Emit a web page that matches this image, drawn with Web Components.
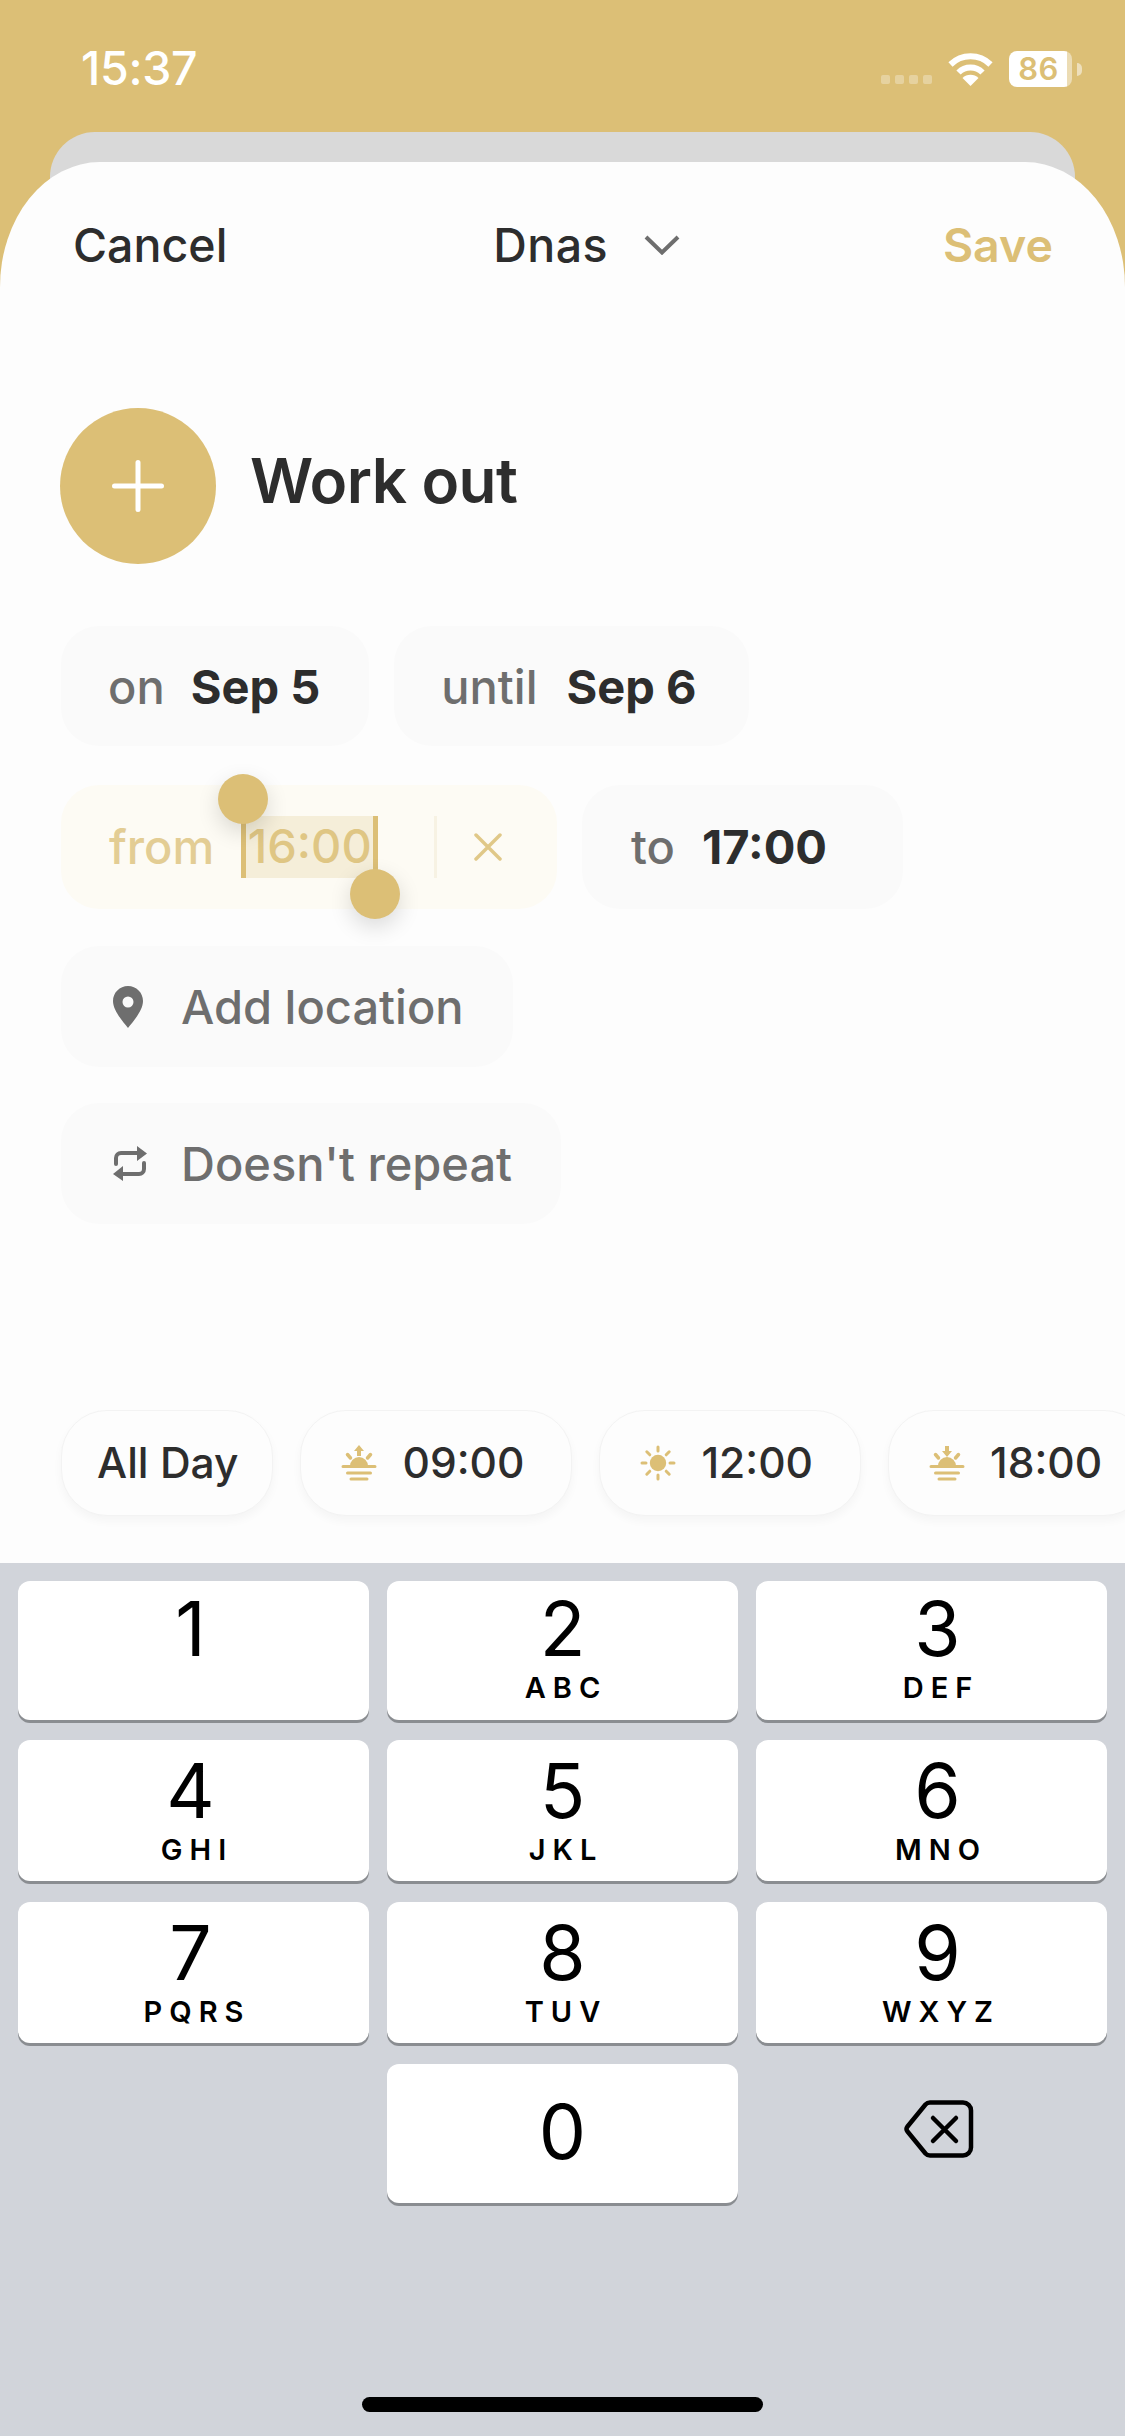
<!DOCTYPE html>
<html lang="en">
<head>
<meta charset="utf-8">
<title>New event</title>
<style>
html,body{margin:0;padding:0;width:1125px;height:2436px;overflow:hidden;background:#dcbf76;font-family:Inter,"Liberation Sans",sans-serif}
</style>
</head>
<body>
<phone-screen>
  <status-bar></status-bar>
  <back-card></back-card>
  <event-sheet>
    <sheet-header></sheet-header>
    <title-row>Work out</title-row>
    <pill-row style="margin-top:62px">
      <field-pill label="on" value="Sep 5"></field-pill>
      <field-pill label="until" value="Sep 6" loose></field-pill>
    </pill-row>
    <pill-row style="margin-top:39px">
      <active-pill></active-pill>
      <field-pill label="to" value="17:00" tall wide></field-pill>
    </pill-row>
    <pill-row style="margin-top:37px">
      <icon-pill icon="pin">Add location</icon-pill>
    </pill-row>
    <pill-row style="margin-top:36px">
      <icon-pill icon="repeat">Doesn't repeat</icon-pill>
    </pill-row>
    <chip-row>
      <time-chip>All Day</time-chip>
      <time-chip icon="sunrise">09:00</time-chip>
      <time-chip icon="sun">12:00</time-chip>
      <time-chip icon="sunset">18:00</time-chip>
    </chip-row>
  </event-sheet>
  <num-pad></num-pad>
</phone-screen>
<script>
const ICONS = {
  pin:`<svg width="30" height="42" viewBox="0 0 30 42"><path fill="#6e6e6e" fill-rule="evenodd" d="M15 0C6.700 0 0 6.700 0 15c0 9.500 9.500 20 15 27 5.500-7 15-17.500 15-27C30 6.700 23.300 0 15 0Zm0 10.500a5.500 5.500 0 1 1 0 11 5.500 5.500 0 0 1 0-11Z"/></svg>`,
  repeat:`<svg width="34" height="35" viewBox="0 0 34 35"><g fill="none" stroke="#6e6e6e" stroke-width="4" stroke-linecap="round"><path d="M3 18v-6a5 5 0 0 1 5-5h17"/><path d="M31 17v6a5 5 0 0 1-5 5H9"/></g><path fill="#6e6e6e" d="M24 0l10 7.500L24 15zM10 20L0 28l10 7z"/></svg>`,
  sunrise:`<svg width="36" height="36" viewBox="0 0 36 36"><g fill="#dcbf76"><path d="M9 21a9 9 0 0 1 18 0z"/><path d="M18 0l5 6h-3v5h-4V6h-3z"/></g><g fill="none" stroke="#dcbf76" stroke-width="3" stroke-linecap="round"><path d="M2 21.500h32M6.500 28h23M10 34h16"/><path stroke-width="3.500" d="M6.500 9.500l3 3.500M29.500 9.500l-3 3.500"/></g></svg>`,
  sunset:`<svg width="36" height="36" viewBox="0 0 36 36"><g fill="#dcbf76"><path d="M9 21a9 9 0 0 1 18 0z"/><path d="M18 12l5-6h-3V1h-4v5h-3z"/></g><g fill="none" stroke="#dcbf76" stroke-width="3" stroke-linecap="round"><path d="M2 21.500h32M6.500 28h23M10 34h16"/><path stroke-width="3.500" d="M6.500 9.500l3 3.500M29.500 9.500l-3 3.500"/></g></svg>`,
  sun:`<svg width="36" height="36" viewBox="0 0 36 36"><circle cx="18" cy="18" r="8.200" fill="#dcbf76"/><g stroke="#dcbf76" stroke-width="3" stroke-linecap="round"><path d="M18 2v4M18 30v4M2 18h4M30 18h4M6.800 6.800l3 3M26.200 26.200l3 3M29.200 6.800l-3 3M9.800 26.200l-3 3"/></g></svg>`
};
function define(name, css, html){
  customElements.define(name, class extends HTMLElement{
    constructor(){super();this.attachShadow({mode:'open'})}
    connectedCallback(){
      const body = typeof html==='function'?html(this):html;
      this.shadowRoot.innerHTML=`<style>${css}</style>${body}`;
    }
  });
}
define('phone-screen',`:host{display:flex;flex-direction:column;width:1125px;height:2436px;background:#dcbf76;overflow:hidden}`,`<slot></slot>`);

define('status-bar',`
  :host{display:flex;align-items:flex-start;justify-content:space-between;height:132px;box-sizing:border-box;padding:46px 43px 0 81px;color:#fff;flex:none}
  .time{font:500 46.500px/44px Inter,"Liberation Sans",sans-serif;letter-spacing:-.3px}
  .right{display:flex;align-items:flex-start;position:relative}
  .dots{display:flex;gap:5px;margin-top:29px;margin-right:16px}
  .dots i{width:9px;height:9px;border-radius:2px;background:#fff;opacity:.3}
  .wifi{margin-top:7px;margin-right:16px}
  .bat{width:63px;height:36px;margin-top:5px;border-radius:8px;background:linear-gradient(90deg,#fff 0 92%,rgba(255,255,255,.45) 92%);color:#dcbf76;font:600 31px/36px Inter,"Liberation Sans",sans-serif;text-align:center;box-sizing:border-box;padding-right:4px;letter-spacing:.5px}
  .nub{width:5px;height:13px;margin:17px 0 0 5px;border-radius:0 6px 6px 0;background:#fff;opacity:.5}
`,`<span class="time">15:37</span>
<div class="right"><div class="dots"><i></i><i></i><i></i><i></i></div>
<svg class="wifi" width="45" height="33" viewBox="0 0 45 33"><g fill="none" stroke="#fff" stroke-width="6"><path d="M2.500 11.500a28.500 28.500 0 0 1 40 0"/><path d="M10.500 19.500a17 17 0 0 1 24 0"/></g><path fill="#fff" d="M22.500 33l-8-8a11.500 11.500 0 0 1 16 0z"/></svg>
<div class="bat">86</div><div class="nub"></div></div>`);

define('back-card',`:host{display:block;flex:none;height:100px;margin:0 50px -70px;background:#d9d9d9;border-radius:45px 45px 0 0}`,``);

define('event-sheet',`
  :host{display:flex;flex-direction:column;height:1401px;flex:none;background:#fdfdfd;border-radius:100px 100px 0 0/125px 125px 0 0;position:relative;overflow:hidden}
`,`<slot></slot>`);

define('sheet-header',`
  :host{display:flex;justify-content:space-between;align-items:center;height:66px;margin-top:50px;padding:0 72px 0 73px;font:500 46.500px/66px Inter,"Liberation Sans",sans-serif;color:#2d2d2d;flex:none}
  .mid{display:flex;align-items:center;gap:36px;margin-left:3px}
  .mid span{letter-spacing:.5px}
  .save{color:#dcbf76;font-weight:600}
`,`<span>Cancel</span><span class="mid"><span>Dnas</span><svg width="36" height="20" viewBox="0 0 36 20"><path d="M2 2l16 15.500L34 2" fill="none" stroke="#6e6e6e" stroke-width="4"/></svg></span><span class="save">Save</span>`);

define('title-row',`
  :host{display:flex;align-items:center;gap:34px;margin-top:130px;padding-left:60px;flex:none}
  .c{width:156px;height:156px;border-radius:50%;background:#dcbf76;display:flex;align-items:center;justify-content:center}
  .t{font:600 62px/76px Inter,"Liberation Sans",sans-serif;color:#2d2d2d;letter-spacing:-.6px;padding-bottom:10px}
`,`<div class="c"><svg width="52" height="52" viewBox="0 0 52 52"><path d="M26 2.500v47M2.500 26h47" stroke="#fff" stroke-width="5" stroke-linecap="round"/></svg></div><div class="t"><slot></slot></div>`);

define('pill-row',`:host{display:flex;gap:25px;padding-left:61px;flex:none}`,`<slot></slot>`);

const pillBase=`display:inline-flex;align-items:center;box-sizing:border-box;height:120px;border-radius:38px;background:#fafafa;font:500 47px/56px Inter,"Liberation Sans",sans-serif;`;
define('field-pill',`
  :host{${pillBase}padding:2px 49px 0 47px;gap:26px;color:#6e6e6e;flex:none}
  :host([loose]){gap:29px;padding-right:52px}
  :host([tall]){height:124px;padding-top:0;padding-left:49px;gap:27px}
  :host([wide]){padding-right:76px}
  b{font-weight:700;color:#2d2d2d}
`,el=>`<span>${el.getAttribute('label')}</span><b>${el.getAttribute('value')}</b>`);

define('active-pill',`
  :host{${pillBase}height:124px;width:496px;padding-left:48px;background:#fdfbf4;color:#e2c98a;position:relative;flex:none}
  .from{margin-right:29px;color:#e3cd94}
  .sel{position:relative;display:inline-block;height:62px;width:133px;background:#f5eed9;line-height:60px;color:#dfc684;text-align:center;white-space:nowrap}
  .bar{position:absolute;top:0;bottom:0;width:5px;background:#dcbf76}
  .l{left:-2px}.r{right:-2px}
  .dot{position:absolute;width:50px;height:50px;border-radius:50%;background:#dcbf76;box-shadow:0 8px 22px rgba(0,0,0,.14)}
  .d1{left:-25px;top:-42px}.d2{right:-24px;bottom:-41px}
  .div{width:3px;height:62px;background:#f7f2e3;margin-left:58px}
  svg{margin-left:37px}
`,`<span class="from">from</span><span class="sel">16:00<i class="bar l"></i><i class="bar r"></i><i class="dot d1"></i><i class="dot d2"></i></span><i class="div"></i><svg width="28" height="28" viewBox="0 0 28 28"><path d="M2 2l24 24M26 2L2 26" stroke="#e0c888" stroke-width="3.500" stroke-linecap="round"/></svg>`);

define('icon-pill',`
  :host{${pillBase}height:121px;padding:0 49px 0 52px;color:#6e6e6e;flex:none}
  .i{width:34px;display:flex;margin-right:34px;justify-content:flex-start}
  .i svg{display:block}
`,el=>`<span class="i">${ICONS[el.getAttribute('icon')]}</span><slot></slot>`);

define('chip-row',`:host{display:flex;gap:27px;padding:0 0 47px 61px;margin-top:auto;flex:none;overflow:hidden}`,`<slot></slot>`);

define('time-chip',`
  :host{display:inline-flex;align-items:center;gap:25px;height:106px;box-sizing:border-box;padding:0 34px 0 35px;border-radius:46px;background:#fdfdfd;border:1px solid #f3f3f3;box-shadow:0 5px 10px rgba(0,0,0,.035);font:500 42.500px/50px Inter,"Liberation Sans",sans-serif;color:#2d2d2d;flex:none}
  :host([icon]){padding-left:40px;padding-right:47px}
  svg{display:block}
`,el=>{const i=el.getAttribute('icon');return `${i?ICONS[i]:''}<slot></slot>`});

define('num-key',`
  :host{display:flex;flex-direction:column;align-items:center;height:139px;border-radius:12px;background:#fff;box-shadow:0 3px 0 #8a8d91;color:#000;font-family:Inter,"Liberation Sans",sans-serif;box-sizing:border-box}
  :host([tall]){height:141px}
  :host([tall]) .n{margin-top:20px}
  :host([col="3"]){padding-left:12px}
  :host([col="1"]) .n{margin-left:-6px}
  :host([mid]) .n{margin-top:37px}
  .n{font:400 75px/58px Inter,"Liberation Sans",sans-serif;margin-top:17px;height:58px;padding-top:2px}
  .l{font:600 29px/30px Inter,"Liberation Sans",sans-serif;letter-spacing:7px;margin-top:15px;margin-right:-7px}
`,el=>`<span class="n">${el.getAttribute('n')}</span><span class="l">${el.getAttribute('l')||''}</span>`);

define('num-pad',`
  :host{display:flex;flex-direction:column;flex:1;background:#d1d4da;padding:18px 18px 24px;box-sizing:border-box}
  .g{display:grid;grid-template-columns:repeat(3,351px);grid-template-rows:136px 139px 139px 139px;column-gap:18px;row-gap:23px}
  .back{display:flex;align-items:center;justify-content:center;height:139px;box-sizing:border-box;padding:0 0 10px 14px}
  .home{width:401px;height:15px;border-radius:8px;background:#000;align-self:center;margin-top:auto}
`,`<div class="g">
<num-key n="1" col="1"></num-key><num-key n="2" l="ABC"></num-key><num-key n="3" l="DEF" col="3"></num-key>
<num-key n="4" l="GHI" col="1" tall></num-key><num-key n="5" l="JKL" tall></num-key><num-key n="6" l="MNO" col="3" tall></num-key>
<num-key n="7" l="PQRS" col="1" tall></num-key><num-key n="8" l="TUV" tall></num-key><num-key n="9" l="WXYZ" col="3" tall></num-key>
<div></div><num-key n="0" mid></num-key>
<div class="back"><svg width="70" height="58" viewBox="0 0 70 58"><path fill="none" stroke="#000" stroke-width="4.500" stroke-linejoin="round" d="M26 2.500h33a8 8 0 0 1 8 8v37a8 8 0 0 1-8 8H26a6 6 0 0 1-4.500-2L3.500 31.500a4 4 0 0 1 0-5l18-22a6 6 0 0 1 4.500-2Z"/><path d="M29 18l23 23M52 18L29 41" stroke="#000" stroke-width="4.500" stroke-linecap="round"/></svg></div>
</div><div class="home"></div>`);
</script>
</body>
</html>
